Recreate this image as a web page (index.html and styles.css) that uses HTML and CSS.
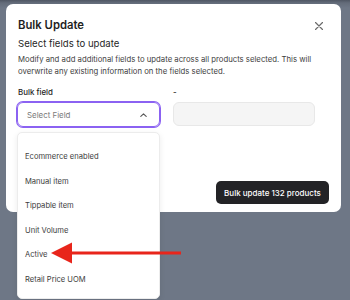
FILE: index.html
```html
<!DOCTYPE html>
<html lang="en">
<head>
    <meta charset="UTF-8">
    <meta name="viewport" content="width=device-width, initial-scale=1.0">
    <title>Bulk Update</title>
    <link rel="stylesheet" href="styles.css">
</head>
<body>
    <div class="modal">
        <div class="modal-header">
            <h1>Bulk Update</h1>
            <button class="close-btn" aria-label="Close">
                <svg width="8" height="8" viewBox="0 0 8 8"><path d="M0.5 0.5 L7.5 7.5 M7.5 0.5 L0.5 7.5" stroke="#6b6b6b" stroke-width="1.2" stroke-linecap="round"/></svg>
            </button>
        </div>
        <h2>Select fields to update</h2>
        <p class="desc">Modify and add additional fields to update across all products selected. This will overwrite any existing information on the fields selected.</p>

        <div class="fields">
            <div class="field field-main">
                <label>Bulk field</label>
                <div class="select open">
                    <span class="placeholder">Select Field</span>
                    <svg width="7" height="4" viewBox="0 0 7 4"><path d="M0.8 3.4 L3.5 0.8 L6.2 3.4" fill="none" stroke="#555" stroke-width="1.1" stroke-linecap="round" stroke-linejoin="round"/></svg>
                </div>
                <ul class="dropdown">
                    <li>Ecommerce enabled</li>
                    <li>Manual item</li>
                    <li>Tippable item</li>
                    <li>Unit Volume</li>
                    <li>Active</li>
                    <li>Retail Price UOM</li>
                </ul>
            </div>
            <div class="field field-value">
                <label>-</label>
                <div class="input-disabled"></div>
            </div>
        </div>

        <div class="actions">
            <button class="primary-btn">Bulk update 132 products</button>
        </div>
    </div>

    <svg class="annotation" width="132" height="24" viewBox="0 0 132 24">
        <rect x="18" y="10.5" width="112" height="3" fill="#e8251b"/>
        <polygon points="0,12 21,1.5 21,22.5" fill="#e8251b"/>
    </svg>
</body>
</html>
```

FILE: styles.css
```css
:root {
    --overlay: #6e7786;
    --text-primary: #1f1f1f;
    --text-secondary: #3d3d3d;
    --muted: #7a7a7a;
    --focus: #8b62f2;
    --border: #e6e6e6;
}

* {
    margin: 0;
    padding: 0;
    box-sizing: border-box;
}

body {
    font-family: 'Inter', 'Liberation Sans', sans-serif;
    background: linear-gradient(180deg, #4f5663 0, #646c7a 3px, var(--overlay) 8px);
    width: 350px;
    height: 300px;
    overflow: hidden;
    position: relative;
    padding: 4px 0 0 6px;
}

.modal {
    width: 335px;
    height: 208px;
    background: #fff;
    border-radius: 7px;
    padding: 14px 12px 8px 12px;
    display: flex;
    flex-direction: column;
}

.modal-header {
    display: flex;
    justify-content: space-between;
    align-items: center;
}

h1 {
    font-size: 11.3px;
    font-weight: 600;
    color: var(--text-primary);
    line-height: 15px;
}

.close-btn {
    background: none;
    border: none;
    width: 8px;
    height: 8px;
    margin-right: 6px;
    display: flex;
}

h2 {
    font-size: 9.6px;
    font-weight: 400;
    color: var(--text-primary);
    margin-top: 4px;
    line-height: 14px;
}

.desc {
    font-size: 7.75px;
    color: var(--text-secondary);
    line-height: 11.5px;
    margin-top: 3px;
}

.fields {
    display: flex;
    gap: 13px;
    margin-top: 9px;
}

.field label {
    display: block;
    font-size: 7.9px;
    font-weight: 500;
    color: var(--text-primary);
    line-height: 12px;
    margin-bottom: 4px;
}

.field-main {
    position: relative;
    width: 143px;
    margin-left: -1px;
}

.field-main label {
    margin-left: 1px;
}

.select {
    height: 25px;
    border: 1px solid var(--focus);
    box-shadow: 0 0 0 1px var(--focus);
    border-radius: 6px;
    display: flex;
    align-items: center;
    justify-content: space-between;
    padding: 0 12px 0 9px;
}

.placeholder {
    font-size: 7.9px;
    color: var(--muted);
}

.dropdown {
    position: absolute;
    top: 46px;
    left: 0;
    width: 143px;
    list-style: none;
    background: #fff;
    border: 1px solid #ececec;
    border-radius: 5px;
    box-shadow: 0 2px 6px rgba(0, 0, 0, 0.08);
    padding: 12px 0 6px;
    z-index: 2;
}

.dropdown li {
    height: 24.5px;
    line-height: 24.5px;
    font-size: 7.6px;
    color: var(--text-secondary);
    padding-left: 7px;
}

.field-value {
    width: 142px;
}

.input-disabled {
    height: 24px;
    background: #f5f5f5;
    border: 1px solid #e8e8e8;
    border-radius: 6px;
}

.actions {
    margin-top: auto;
    display: flex;
    justify-content: flex-end;
}

.primary-btn {
    background: #232326;
    color: #fff;
    border: none;
    border-radius: 5px;
    height: 23px;
    width: 113px;
    font-family: inherit;
    font-size: 8px;
    font-weight: 500;
}

.annotation {
    position: absolute;
    left: 51px;
    top: 241px;
    z-index: 3;
}
```
